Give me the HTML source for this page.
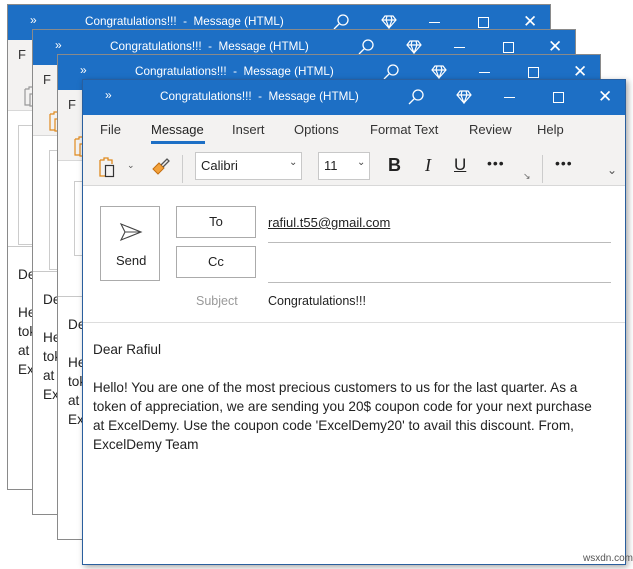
<!DOCTYPE html>
<html><head><meta charset="utf-8">
<style>
*{margin:0;padding:0;box-sizing:border-box}
body{width:633px;height:569px;background:#fff;position:relative;overflow:hidden;font-family:"Liberation Sans",sans-serif;color:#222}
.w{position:absolute;width:544px;height:486px;background:#fff;border:1px solid #8a8a8a;overflow:hidden}
.w.top{border:1px solid #2a5f9e;box-shadow:2px 2px 6px rgba(0,0,0,.35)}
.a{position:absolute;white-space:nowrap}
.tb{position:absolute;left:0;top:0;width:100%;height:35px;background:#1d6fc5;color:#fff}
.tt{position:absolute;left:77px;top:10px;font-size:11.7px;white-space:nowrap}
.rb{position:absolute;left:0;top:35px;width:100%;height:71px;background:#f3f2f1;border-bottom:1px solid #d8d8d8}
.tab{font-size:13px;color:#333;top:7px}
.box{position:absolute;background:#fff;border:1px solid #c8c8c8}
.btn{position:absolute;border:1px solid #ababab;background:#fff;font-size:13px;text-align:center}
.ln{position:absolute;height:1px;background:#c8c8c8}
.p{font-size:13.6px;line-height:19px;color:#222}
</style></head><body>

<div class="w" style="left:7px;top:4px">
 <div class="tb"><span class="a" style="left:22px;top:8px;font-size:12px">»</span><span class="tt">Congratulations!!!&nbsp; -&nbsp; Message (HTML)</span>
 <svg class="a" style="left:325px;top:9px" width="16" height="16"><circle cx="10" cy="6" r="5" fill="none" stroke="#fff" stroke-width="1.3"/><line x1="6" y1="10" x2="1" y2="15" stroke="#fff" stroke-width="1.3"/></svg>
 <svg class="a" style="left:373px;top:10px" width="16" height="14"><path d="M4 1H12L15 5L8 13L1 5Z M1 5H15 M6 1L5 5L8 13L11 5L10 1" fill="none" stroke="#fff" stroke-width="1.2"/></svg>
 <div class="a" style="left:421px;top:17px;width:11px;height:1px;background:#fff"></div>
 <div class="a" style="left:470px;top:12px;width:11px;height:11px;border:1px solid #fff"></div>
 <span class="a" style="left:515px;top:7px;font-size:17px">✕</span></div>
 <div class="rb"><span class="a tab" style="left:10px">F</span><svg class="a" style="left:14px;top:45px" width="20" height="22"><path d="M3 4H7V2H11V4H15V8 M3 4V20H8 M8 9H17V21H8Z" fill="none" stroke="#999" stroke-width="1.2"/></svg></div>
 <div class="ln" style="left:0;top:241px;width:100%"></div>
 <div class="box" style="left:10px;top:120px;width:40px;height:120px;border-color:#ccc"></div>
 <span class="a p" style="left:10px;top:260px">Dear Rafiul</span>
 <div class="a p" style="left:10px;top:298px">Hello! You are one of the most precious customers<br>token of appreciation<br>at ExcelDemy.<br>ExcelDemy Team</div>
</div>

<div class="w" style="left:32px;top:29px">
 <div class="tb"><span class="a" style="left:22px;top:8px;font-size:12px">»</span><span class="tt">Congratulations!!!&nbsp; -&nbsp; Message (HTML)</span>
 <svg class="a" style="left:325px;top:9px" width="16" height="16"><circle cx="10" cy="6" r="5" fill="none" stroke="#fff" stroke-width="1.3"/><line x1="6" y1="10" x2="1" y2="15" stroke="#fff" stroke-width="1.3"/></svg>
 <svg class="a" style="left:373px;top:10px" width="16" height="14"><path d="M4 1H12L15 5L8 13L1 5Z M1 5H15 M6 1L5 5L8 13L11 5L10 1" fill="none" stroke="#fff" stroke-width="1.2"/></svg>
 <div class="a" style="left:421px;top:17px;width:11px;height:1px;background:#fff"></div>
 <div class="a" style="left:470px;top:12px;width:11px;height:11px;border:1px solid #fff"></div>
 <span class="a" style="left:515px;top:7px;font-size:17px">✕</span></div>
 <div class="rb"><span class="a tab" style="left:10px">F</span><svg class="a" style="left:14px;top:45px" width="20" height="22"><path d="M3 4H7V2H11V4H15V8 M3 4V20H8 M8 9H17V21H8Z" fill="none" stroke="#e08a1e" stroke-width="1.2"/></svg></div>
 <div class="ln" style="left:0;top:241px;width:100%"></div>
 <div class="box" style="left:16px;top:120px;width:40px;height:120px;border-color:#ccc"></div>
 <span class="a p" style="left:10px;top:260px">Dear Rafiul</span>
 <div class="a p" style="left:10px;top:298px">Hello! You are one of the most precious customers<br>token of appreciation<br>at ExcelDemy.<br>ExcelDemy Team</div>
</div>

<div class="w" style="left:57px;top:54px">
 <div class="tb"><span class="a" style="left:22px;top:8px;font-size:12px">»</span><span class="tt">Congratulations!!!&nbsp; -&nbsp; Message (HTML)</span>
 <svg class="a" style="left:325px;top:9px" width="16" height="16"><circle cx="10" cy="6" r="5" fill="none" stroke="#fff" stroke-width="1.3"/><line x1="6" y1="10" x2="1" y2="15" stroke="#fff" stroke-width="1.3"/></svg>
 <svg class="a" style="left:373px;top:10px" width="16" height="14"><path d="M4 1H12L15 5L8 13L1 5Z M1 5H15 M6 1L5 5L8 13L11 5L10 1" fill="none" stroke="#fff" stroke-width="1.2"/></svg>
 <div class="a" style="left:421px;top:17px;width:11px;height:1px;background:#fff"></div>
 <div class="a" style="left:470px;top:12px;width:11px;height:11px;border:1px solid #fff"></div>
 <span class="a" style="left:515px;top:7px;font-size:17px">✕</span></div>
 <div class="rb"><span class="a tab" style="left:10px">F</span><svg class="a" style="left:14px;top:45px" width="20" height="22"><path d="M3 4H7V2H11V4H15V8 M3 4V20H8 M8 9H17V21H8Z" fill="none" stroke="#e08a1e" stroke-width="1.2"/></svg></div>
 <div class="ln" style="left:0;top:241px;width:100%"></div>
 <div class="box" style="left:16px;top:126px;width:40px;height:75px;border-color:#ccc"></div>
 <span class="a p" style="left:10px;top:260px">Dear Rafiul</span>
 <div class="a p" style="left:10px;top:298px">Hello! You are one of the most precious customers<br>token of appreciation<br>at ExcelDemy.<br>ExcelDemy Team</div>
</div>

<div class="w top" style="left:82px;top:79px">
 <div class="tb"><span class="a" style="left:22px;top:8px;font-size:12px">»</span><span class="tt">Congratulations!!!&nbsp; -&nbsp; Message (HTML)</span>
 <svg class="a" style="left:325px;top:9px" width="16" height="16"><circle cx="10" cy="6" r="5" fill="none" stroke="#fff" stroke-width="1.3"/><line x1="6" y1="10" x2="1" y2="15" stroke="#fff" stroke-width="1.3"/></svg>
 <svg class="a" style="left:373px;top:10px" width="16" height="14"><path d="M4 1H12L15 5L8 13L1 5Z M1 5H15 M6 1L5 5L8 13L11 5L10 1" fill="none" stroke="#fff" stroke-width="1.2"/></svg>
 <div class="a" style="left:421px;top:17px;width:11px;height:1px;background:#fff"></div>
 <div class="a" style="left:470px;top:12px;width:11px;height:11px;border:1px solid #fff"></div>
 <span class="a" style="left:515px;top:7px;font-size:17px">✕</span></div>
 <div class="rb">
  <span class="a tab" style="left:17px">File</span>
  <span class="a tab" style="left:68px;color:#222">Message</span>
  <div class="a" style="left:68px;top:26px;width:54px;height:3px;background:#1d6fc5"></div>
  <span class="a tab" style="left:149px">Insert</span>
  <span class="a tab" style="left:211px">Options</span>
  <span class="a tab" style="left:287px">Format Text</span>
  <span class="a tab" style="left:386px">Review</span>
  <span class="a tab" style="left:454px">Help</span>
  <svg class="a" style="left:14px;top:41px" width="22" height="22"><path d="M3 4H7V2H11V4H15V8 M3 4V20H8" fill="none" stroke="#e08a1e" stroke-width="1.3"/><rect x="8.5" y="9.5" width="8" height="11" fill="none" stroke="#333" stroke-width="1.2"/></svg>
  <span class="a" style="left:44px;top:45px;font-size:9px;color:#555">⌄</span>
  <svg class="a" style="left:68px;top:42px" width="20" height="18"><path d="M2 12L8 6L13 11L7 17Z" fill="#f3a23b" stroke="#c46e10"/><path d="M10 8L16 2L18 4L12 10" fill="none" stroke="#555" stroke-width="1.3"/></svg>
  <div class="a" style="left:99px;top:40px;width:1px;height:28px;background:#ccc"></div>
  <div class="box" style="left:112px;top:37px;width:107px;height:28px"></div>
  <span class="a" style="left:118px;top:43px;font-size:13px">Calibri</span>
  <span class="a" style="left:206px;top:42px;font-size:10px;color:#444">⌄</span>
  <div class="box" style="left:235px;top:37px;width:52px;height:28px"></div>
  <span class="a" style="left:241px;top:43px;font-size:13px">11</span>
  <span class="a" style="left:274px;top:42px;font-size:10px;color:#444">⌄</span>
  <span class="a" style="left:305px;top:40px;font-size:18px;font-weight:bold">B</span>
  <span class="a" style="left:342px;top:40px;font-size:18px;font-family:'Liberation Serif',serif;font-style:italic">I</span>
  <span class="a" style="left:371px;top:40px;font-size:17px;text-decoration:underline">U</span>
  <span class="a" style="left:404px;top:40px;font-size:14px;letter-spacing:1px">•••</span>
  <span class="a" style="left:440px;top:56px;font-size:9px;color:#666">↘</span>
  <div class="a" style="left:459px;top:40px;width:1px;height:28px;background:#ccc"></div>
  <span class="a" style="left:472px;top:40px;font-size:14px;letter-spacing:1px">•••</span>
  <span class="a" style="left:524px;top:48px;font-size:12px;color:#555">⌄</span>
 </div>
 <div class="btn" style="left:17px;top:126px;width:60px;height:75px">
  <svg style="position:absolute;left:18px;top:15px" width="24" height="20"><path d="M2 2L22 10L2 18L6 10Z M6 10H22" fill="none" stroke="#444" stroke-width="1.1"/></svg>
  <span class="a" style="left:15px;top:46px">Send</span></div>
 <div class="btn" style="left:93px;top:126px;width:80px;height:32px;line-height:30px">To</div>
 <div class="btn" style="left:93px;top:166px;width:80px;height:32px;line-height:30px">Cc</div>
 <span class="a" style="left:185px;top:135px;font-size:13px;text-decoration:underline;color:#222">rafiul.t55@gmail.com</span>
 <div class="ln" style="left:185px;top:162px;width:343px;background:#bbb"></div>
 <div class="ln" style="left:185px;top:202px;width:343px;background:#bbb"></div>
 <span class="a" style="left:113px;top:214px;font-size:12.5px;color:#999">Subject</span>
 <span class="a" style="left:185px;top:214px;font-size:12.5px">Congratulations!!!</span>
 <div class="ln" style="left:0;top:242px;width:100%;background:#ddd"></div>
 <span class="a p" style="left:10px;top:260px">Dear Rafiul</span>
 <div class="a p" style="left:10px;top:298px">Hello! You are one of the most precious customers to us for the last quarter. As a<br>token of appreciation, we are sending you 20$ coupon code for your next purchase<br>at ExcelDemy. Use the coupon code 'ExcelDemy20' to avail this discount. From,<br>ExcelDemy Team</div>
</div>
<span class="a" style="left:583px;top:553px;font-size:10px;color:#555">wsxdn.com</span>
</body></html>
